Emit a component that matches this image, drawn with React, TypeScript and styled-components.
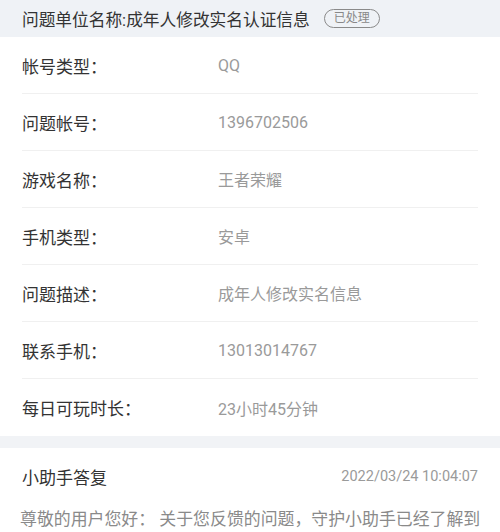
import * as React from 'react';
import styled, { createGlobalStyle } from 'styled-components';

const GlobalStyle = createGlobalStyle`
  html, body {
    margin: 0;
    padding: 0;
    background: #ffffff;
    font-family: Roboto, "Noto Sans CJK SC", sans-serif;
  }
`;

interface Field {
  label: string;
  value: string;
}

const fields: Field[] = [
  { label: '帐号类型：', value: 'QQ' },
  { label: '问题帐号：', value: '1396702506' },
  { label: '游戏名称：', value: '王者荣耀' },
  { label: '手机类型：', value: '安卓' },
  { label: '问题描述：', value: '成年人修改实名信息' },
  { label: '联系手机：', value: '13013014767' },
  { label: '每日可玩时长：', value: '23小时45分钟' },
];

const App: React.FC = () => {
  return (
    <Page>
      <GlobalStyle />
      <Header>
        <HeaderTitle>问题单位名称:成年人修改实名认证信息</HeaderTitle>
        <Badge>已处理</Badge>
      </Header>
      <FieldList>
        {fields.map((f, i) => (
          <Row key={f.label} last={i === fields.length - 1}>
            <Label>{f.label}</Label>
            <Value>{f.value}</Value>
          </Row>
        ))}
      </FieldList>
      <Divider />
      <Reply>
        <ReplyHead>
          <ReplyTitle>小助手答复</ReplyTitle>
          <ReplyDate>2022/03/24 10:04:07</ReplyDate>
        </ReplyHead>
        <ReplyText>尊敬的用户您好： 关于您反馈的问题，守护小助手已经了解到</ReplyText>
      </Reply>
    </Page>
  );
};

const Page = styled.div`
  width: 500px;
  height: 532px;
  overflow: hidden;
  background: #fff;
`;

const Header = styled.div`
  height: 37px;
  background: #eff2f6;
  display: flex;
  align-items: center;
  padding: 0 22px;
  gap: 14px;
`;

const HeaderTitle = styled.span`
  font-size: 16.7px;
  color: #333;
  white-space: nowrap;
`;

const Badge = styled.span`
  font-size: 12px;
  color: #888;
  border: 1px solid #8a8a8a;
  border-radius: 10px;
  padding: 0 9px;
  height: 17px;
  line-height: 17px;
`;

const FieldList = styled.div`
  padding: 0 22px;
`;

const Row = styled.div<{ last: boolean }>`
  height: 57px;
  display: flex;
  align-items: center;
  border-bottom: ${({ last }) => (last ? 'none' : '1px solid #f0f0f0')};
  box-sizing: border-box;
`;

const Label = styled.span`
  width: 196px;
  font-size: 17px;
  color: #333;
`;

const Value = styled.span`
  font-size: 16px;
  color: #9a9a9a;
`;

const Divider = styled.div`
  height: 12px;
  background: #f1f3f6;
`;

const Reply = styled.div`
  padding: 0 20px;
`;

const ReplyHead = styled.div`
  height: 57px;
  display: flex;
  align-items: center;
  justify-content: space-between;
  padding: 0 2px;
`;

const ReplyTitle = styled.span`
  font-size: 17px;
  color: #333;
`;

const ReplyDate = styled.span`
  font-size: 14.5px;
  color: #9a9a9a;
`;

const ReplyText = styled.p`
  margin: 0;
  font-size: 16.9px;
  line-height: 28px;
  color: #8a8a8a;
  white-space: nowrap;
`;

export default App;
